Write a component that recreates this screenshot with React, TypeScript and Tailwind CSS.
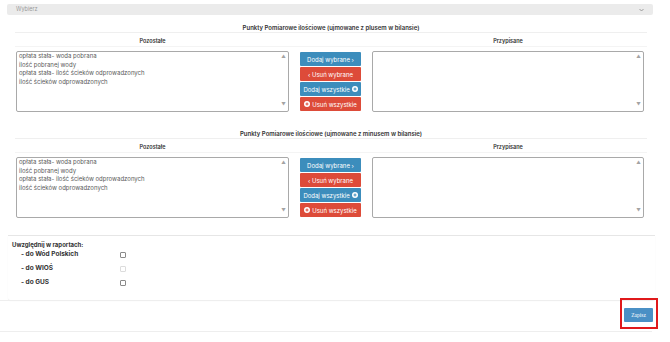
import React from "react";

const items = [
  "opłata stała- woda pobrana",
  "ilość pobranej wody",
  "opłata stała- ilość ścieków odprowadzonych",
  "ilość ścieków odprowadzonych",
];

function ListBox({ values }: { values: string[] }) {
  return (
    <div className="relative h-[61px] border border-[#a9a9a9] rounded-[2px] bg-white">
      <div className="pl-[2px] text-[6px] leading-[8.7px] text-[#5a5a5a]">
        {values.map((v) => (
          <div key={v}>{v}</div>
        ))}
      </div>
      <div className="absolute right-0 top-0 bottom-0 w-[9px] flex flex-col justify-between items-center py-[2px] text-[4.5px] text-[#a3a3a3]">
        <span>▲</span>
        <span>▼</span>
      </div>
    </div>
  );
}

function PlusCircle() {
  return (
    <svg width="6" height="6" viewBox="0 0 12 12" className="inline-block">
      <circle cx="6" cy="6" r="6" fill="white" />
      <path d="M6 3v6M3 6h6" stroke="currentColor" strokeWidth="2" />
    </svg>
  );
}

function Buttons() {
  const base =
    "h-[14px] w-[61px] flex items-center justify-center gap-[2px] text-white text-[6px] rounded-[1px]";
  return (
    <div className="w-[61px] flex flex-col gap-[1px] pt-[1px]">
      <div className={`${base} bg-[#3c8dbc]`}>Dodaj wybrane ›</div>
      <div className={`${base} bg-[#dd4b39]`}>‹ Usuń wybrane</div>
      <div className={`${base} bg-[#3c8dbc]`}>
        Dodaj wszystkie
        <span className="text-[#3c8dbc] flex">
          <PlusCircle />
        </span>
      </div>
      <div className={`${base} bg-[#dd4b39]`}>
        <span className="text-[#dd4b39] flex">
          <PlusCircle />
        </span>
        Usuń wszystkie
      </div>
    </div>
  );
}

function Section({ title }: { title: string }) {
  return (
    <div className="ml-[15px] w-[632px]">
      <div className="h-[11px] flex items-center justify-center border-b border-[#efefef] text-[6px] font-semibold text-[#333]">
        {title}
      </div>
      <div className="h-[14px] flex items-end pb-[1px] border-b border-[#f4f4f4] text-[5.5px] font-semibold text-[#333]">
        <div className="ml-[1px] w-[273px] text-center">Pozostałe</div>
        <div className="w-[83px]" />
        <div className="w-[272px] text-center">Przypisane</div>
      </div>
      <div className="flex pt-[4px] pl-[1px] gap-[11px]">
        <div className="w-[273px]">
          <ListBox values={items} />
        </div>
        <Buttons />
        <div className="w-[272px]">
          <ListBox values={[]} />
        </div>
      </div>
    </div>
  );
}

export default function App() {
  return (
    <div
      className="w-[670px] h-[342px] bg-white overflow-hidden relative"
      style={{ fontFamily: "Inter, 'Noto Sans', sans-serif" }}
    >
      <div className="pl-[7px] pt-[4px]">
        <div className="w-[646px] h-[11px] bg-[#ebebeb] rounded-[2px] flex items-center justify-between px-[9px] text-[5.5px] text-[#9a9a9a]">
          <span>Wybierz</span>
          <svg width="5" height="4" viewBox="0 0 10 6">
            <path d="M1 1l4 4 4-4" stroke="#888" strokeWidth="1.6" fill="none" />
          </svg>
        </div>
      </div>
      <div className="mt-[7px]">
        <Section title="Punkty Pomiarowe ilościowe (ujmowane z plusem w bilansie)" />
      </div>
      <div className="mt-[16px]">
        <Section title="Punkty Pomiarowe ilościowe (ujmowane z minusem w bilansie)" />
      </div>
      <div className="mt-[17px] ml-[8px] w-[647px] h-[65px] border-t border-[#e6e6e6] shadow-[0_1px_1px_rgba(0,0,0,0.08)] rounded-b-[2px] pl-[4px] pt-[4px] text-[6px] font-bold text-[#333]">
        <div className="h-[8px] flex items-center">Uwzględnij w raportach:</div>
        {[
          { l: "- do Wód Polskich", d: false },
          { l: "- do WIOŚ", d: true },
          { l: "- do GUS", d: false },
        ].map((r) => (
          <div key={r.l} className="h-[14px] flex items-center">
            <div className="ml-[9px] w-[99px] text-[6.5px]">{r.l}</div>
            <div
              className={`w-[6px] h-[6px] rounded-[1px] border ${
                r.d ? "border-[#dcdcdc]" : "border-[#8a8a8a]"
              } bg-white`}
            />
          </div>
        ))}
      </div>
      <div className="w-[652px] h-[32px] border-t border-b border-[#eeeeee] flex items-center justify-end">
        <div
          className="w-[29px] h-[14px] mr-[-1px] mb-[2px] bg-[#4a90c5] rounded-[1px] text-white text-[5.5px] flex items-center justify-center"
          style={{ fontFamily: "'Liberation Serif', serif" }}
        >
          Zapisz
        </div>
      </div>
      <div className="absolute left-[620px] top-[298px] w-[38px] h-[31px] border-2 border-[#e0191b]" />
    </div>
  );
}
